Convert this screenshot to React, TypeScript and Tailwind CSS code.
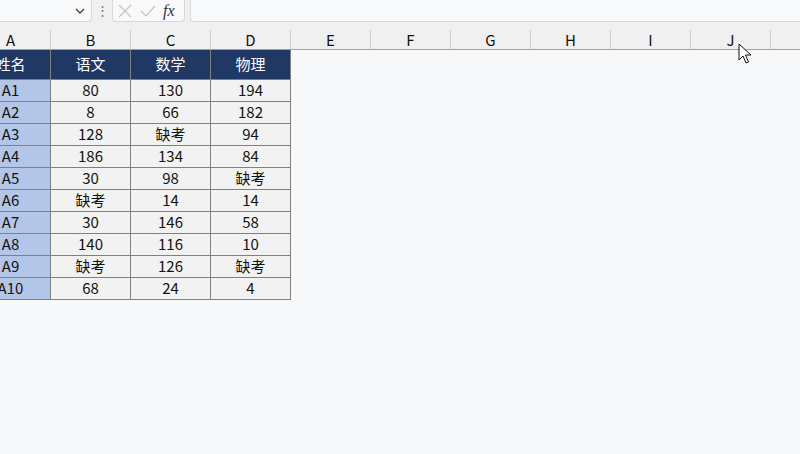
import React from "react";

// Spreadsheet screenshot: formula bar, column headers and a small score table

const cols = ["A", "B", "C", "D", "E", "F", "G", "H", "I", "J", "K"];

const rows: string[][] = [
  ["A1", "80", "130", "194"],
  ["A2", "8", "66", "182"],
  ["A3", "128", "缺考", "94"],
  ["A4", "186", "134", "84"],
  ["A5", "30", "98", "缺考"],
  ["A6", "缺考", "14", "14"],
  ["A7", "30", "146", "58"],
  ["A8", "140", "116", "10"],
  ["A9", "缺考", "126", "缺考"],
  ["A10", "68", "24", "4"],
];

const font = { fontFamily: '"Microsoft YaHei", "Noto Sans CJK SC", "Noto Sans", sans-serif' };

function Cursor() {
  return (
    <svg className="absolute left-[738px] top-[43px]" width="14" height="22" viewBox="0 0 14 22">
      <path
        d="M1 1 L1 17 L5 13 L8 20 L10.5 19 L7.5 12 L13 12 Z"
        fill="#ffffff"
        stroke="#111111"
        strokeWidth="1"
        strokeLinejoin="round"
      />
    </svg>
  );
}

export default function App() {
  return (
    <div className="relative w-[800px] h-[454px] overflow-hidden bg-[#f7f8fa] text-[#111]" style={font}>
      {/* Formula bar */}
      <div className="flex h-[30px] bg-[#f0f0f0]">
        <div className="flex h-[22px] w-[92px] items-center justify-end rounded-br-[4px] border-b border-r border-[#d9d9d9] bg-[#f8f9fa] pr-[4px]">
          <svg width="14" height="10" viewBox="0 0 14 10">
            <path d="M3 3 L7 7 L11 3" fill="none" stroke="#444" strokeWidth="1.4" />
          </svg>
        </div>
        <div className="flex w-[20px] items-start justify-center pt-[3px] text-[13px] leading-[14px] text-[#777]">⋮</div>
        <div className="flex h-[22px] w-[73px] items-center gap-[6px] rounded-b-[4px] border-b border-l border-r border-[#d9d9d9] bg-[#f8f9fa] pl-[4px]">
          <svg width="16" height="16" viewBox="0 0 16 16">
            <path d="M2 2 L14 14 M14 2 L2 14" stroke="#c4c4c4" strokeWidth="1.2" />
          </svg>
          <svg width="18" height="16" viewBox="0 0 18 16">
            <path d="M2 8 L7 13 L16 3" fill="none" stroke="#c4c4c4" strokeWidth="1.2" />
          </svg>
          <span className="text-[16px] italic leading-none text-[#333]" style={{ fontFamily: '"Liberation Serif", serif' }}>
            fx
          </span>
        </div>
        <div className="ml-[5px] h-[22px] flex-1 rounded-bl-[4px] border-b border-l border-[#d9d9d9] bg-[#f8f9fa]" />
      </div>

      {/* Column headers */}
      <div className="flex h-[20px] border-b border-[#a0a0a0] bg-[#f0f0f0] ml-[-29px]">
        {cols.map((c) => (
          <div
            key={c}
            className="flex w-[80px] shrink-0 items-center justify-center border-r border-[#cfcfcf] text-[15px] leading-none"
          >
            {c}
          </div>
        ))}
      </div>

      {/* Table */}
      <div className="ml-[-29px] flex w-[320px] flex-col">
        <div className="flex h-[30px] bg-[#203864] text-white text-[15px]">
          {["姓名", "语文", "数学", "物理"].map((h) => (
            <div
              key={h}
              className="flex w-[80px] shrink-0 items-center justify-center border-b border-r border-[#808080]"
            >
              {h}
            </div>
          ))}
        </div>
        {rows.map((r) => (
          <div key={r[0]} className="flex h-[22px] text-[15px]">
            {r.map((v, i) => (
              <div
                key={i}
                className={`flex w-[80px] shrink-0 items-center justify-center border-b border-r border-[#808080] ${
                  i === 0 ? "bg-[#b4c6e7]" : "bg-[#f2f2f2]"
                }`}
              >
                {v}
              </div>
            ))}
          </div>
        ))}
      </div>

      <Cursor />
    </div>
  );
}
